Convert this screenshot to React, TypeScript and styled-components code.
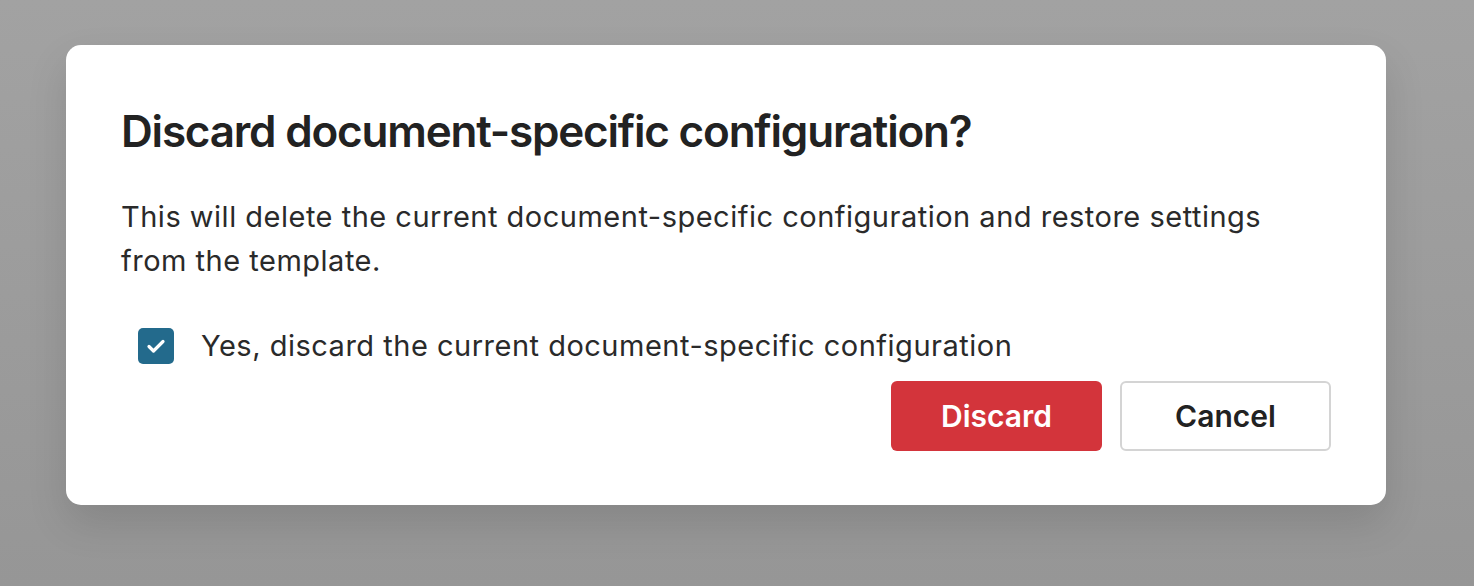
import React from "react";
import styled, { createGlobalStyle } from "styled-components";

const Global = createGlobalStyle`
  html, body { margin: 0; padding: 0; }
  body {
    background: linear-gradient(180deg, #a2a2a2 0%, #969696 100%);
    font-family: Inter, "Noto Sans", sans-serif;
    min-height: 586px;
  }
`;

const Page = styled.div`
  width: 1474px;
  height: 586px;
  padding: 45px 0 0 66px;
  box-sizing: border-box;
`;

const Dialog = styled.div`
  width: 1320px;
  height: 460px;
  box-sizing: border-box;
  background: #fff;
  border-radius: 15px;
  box-shadow: 0 18px 40px rgba(0, 0, 0, 0.12);
  padding: 58px 55px 54px 55px;
  display: flex;
  flex-direction: column;
  color: #232323;
`;

const Title = styled.h2`
  margin: 0;
  font-size: 44px;
  line-height: 56px;
  font-weight: 600;
  letter-spacing: -1.2px;
  color: #222;
`;

const Body = styled.p`
  margin: 36px 0 0;
  font-size: 29px;
  line-height: 44px;
  font-weight: 400;
  letter-spacing: 0.5px;
  color: #2a2a2a;
`;

const CheckRow = styled.label`
  display: flex;
  align-items: center;
  gap: 27px;
  margin: 43px 0 0 17px;
  font-size: 29px;
  line-height: 40px;
  letter-spacing: 0.5px;
  color: #2a2a2a;
`;

const Box = styled.span`
  width: 36px;
  height: 36px;
  border-radius: 5px;
  background: #236a8c;
  display: flex;
  align-items: center;
  justify-content: center;
  flex: none;
`;

const Actions = styled.div`
  display: flex;
  justify-content: flex-end;
  gap: 18px;
  margin-top: auto;
`;

const Button = styled.button<{ $primary?: boolean }>`
  width: 211px;
  height: 70px;
  box-sizing: border-box;
  border-radius: 6px;
  font-family: Inter, "Noto Sans", sans-serif;
  font-size: 30px;
  font-weight: 600;
  cursor: pointer;
  background: ${(p) => (p.$primary ? "#d3343b" : "#fff")};
  color: ${(p) => (p.$primary ? "#fff" : "#222")};
  border: ${(p) => (p.$primary ? "none" : "2px solid #d4d4d4")};
`;

export default function App() {
  return (
    <>
      <Global />
      <Page>
        <Dialog>
          <Title>Discard document-specific configuration?</Title>
          <Body>
            This will delete the current document-specific configuration and restore settings
            <br />
            from the template.
          </Body>
          <CheckRow>
            <Box>
              <svg width="20" height="16" viewBox="0 0 20 16" fill="none">
                <path d="M3 8.5l4.5 4.5L17 3.5" stroke="#fff" strokeWidth="3.2" strokeLinecap="round" strokeLinejoin="round" />
              </svg>
            </Box>
            Yes, discard the current document-specific configuration
          </CheckRow>
          <Actions>
            <Button $primary>Discard</Button>
            <Button>Cancel</Button>
          </Actions>
        </Dialog>
      </Page>
    </>
  );
}
